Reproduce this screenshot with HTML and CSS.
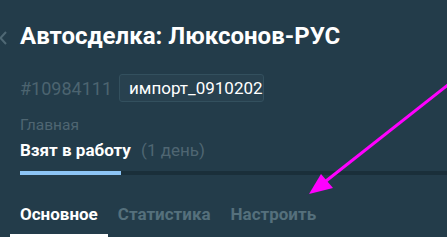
FILE: index.html
```html
<!DOCTYPE html>
<html lang="ru">
<head>
<meta charset="UTF-8">
<meta name="viewport" content="width=device-width, initial-scale=1.0">
<title>Автосделка</title>
<link rel="stylesheet" href="styles.css">
</head>
<body>

<div class="deal-header">
  <div class="deal-title-row">
    <svg class="back-icon" width="20" height="14" viewBox="0 0 20 14">
      <path d="M6 1 L0.5 7 L6 13" fill="none" stroke="#4f6874" stroke-width="2"/>
    </svg>
    <h1 class="deal-title">Автосделка: Люксонов-РУС</h1>
  </div>

  <div class="deal-meta">
    <span class="deal-id">#10984111</span>
    <span class="deal-tag">импорт_09102020</span>
  </div>

  <div class="deal-stage">
    <div class="stage-pipeline">Главная</div>
    <div class="stage-name">Взят в работу <span class="stage-days">(1 день)</span></div>
  </div>
  <div class="stage-progress"><div class="stage-progress-fill"></div></div>

  <div class="deal-tabs">
    <a class="deal-tab active">Основное</a>
    <a class="deal-tab">Статистика</a>
    <a class="deal-tab">Настроить</a>
  </div>
</div>

<svg class="pointer-arrow" width="447" height="251" viewBox="0 0 447 251">
  <line x1="449" y1="84" x2="326" y2="181" stroke="#ff00ff" stroke-width="3"/>
  <polygon points="309,194 321,174 333,188" fill="#ff00ff"/>
</svg>

</body>
</html>
```

FILE: styles.css
```css
body {
  margin: 0;
  font-family: Roboto, "Noto Sans", sans-serif;
  background: #ffffff;
}
.deal-header {
  background-color: #233c4a;
  height: 237px;
  overflow: hidden;
}
.deal-title-row {
  display: flex;
  align-items: center;
  padding-top: 21px;
}
.back-icon {
  flex: none;
  margin-top: 3px;
}
.deal-title {
  margin: 0;
  color: #ffffff;
  font-size: 24px;
  line-height: 30px;
  font-weight: 700;
  white-space: nowrap;
}
.deal-meta {
  display: flex;
  align-items: center;
  padding-left: 20px;
  margin-top: 23px;
}
.deal-id {
  color: #4c6470;
  font-size: 18px;
  margin-right: 7px;
}
.deal-tag {
  display: block;
  width: 134px;
  overflow: hidden;
  white-space: nowrap;
  background: #28414f;
  border: 1px solid #33505e;
  border-radius: 3px;
  color: #ffffff;
  font-size: 17px;
  line-height: 26px;
  padding: 0 0 0 9px;
}
.deal-stage {
  padding-left: 20px;
  margin-top: 15px;
}
.stage-pipeline {
  color: #4f6672;
  font-size: 15.5px;
  line-height: 16px;
}
.stage-name {
  color: #ffffff;
  font-size: 17px;
  font-weight: 700;
  line-height: 22px;
  margin-top: 6px;
}
.stage-days {
  color: #4f6672;
  font-weight: 400;
  margin-left: 6px;
}
.stage-progress {
  margin: 10px 0 0 20px;
  height: 4px;
  background: #1a2f3a;
}
.stage-progress-fill {
  width: 101px;
  height: 100%;
  background: #8cc5f6;
}
.deal-tabs {
  display: flex;
  padding-left: 10px;
  margin-top: 28px;
}
.deal-tab {
  color: #55707c;
  font-size: 17px;
  font-weight: 700;
  line-height: 22px;
  padding: 0 10px 9px 10px;
  border-bottom: 4px solid transparent;
}
.deal-tab.active {
  color: #ffffff;
  border-bottom-color: #ffffff;
}
.pointer-arrow {
  position: absolute;
  left: 0;
  top: 0;
  pointer-events: none;
}
```
